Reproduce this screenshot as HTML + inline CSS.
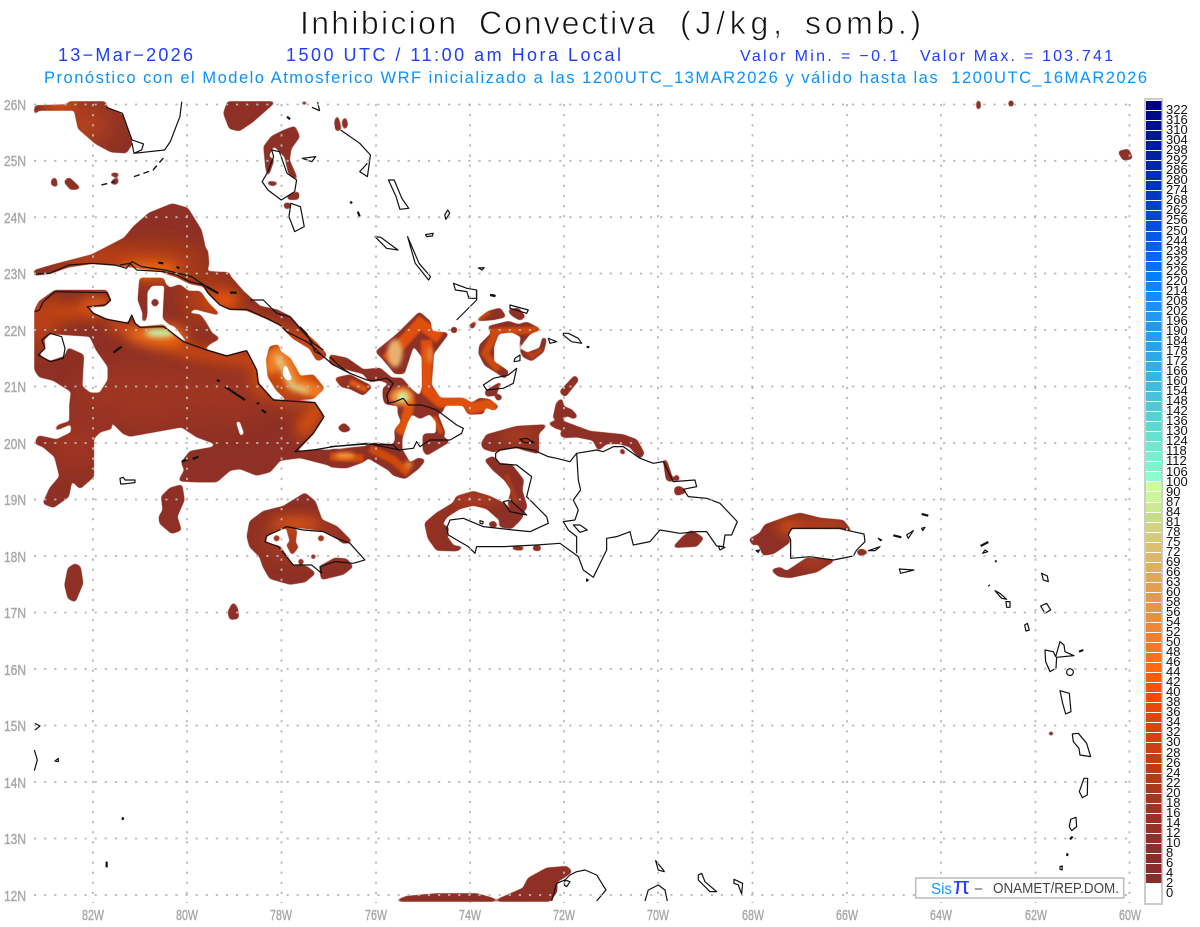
<!DOCTYPE html>
<html lang="es"><head><meta charset="utf-8"><title>Inhibicion Convectiva</title>
<style>html,body{margin:0;padding:0;background:#fff}svg{display:block}text{font-family:"Liberation Sans",sans-serif;white-space:pre}
.c path{fill:none;stroke:#111;stroke-width:1.2;vector-effect:non-scaling-stroke;stroke-linejoin:round}
.c .t path,.t path{stroke-width:2.2}
.c .d path{stroke-width:1.4;stroke-dasharray:6 4}
</style></head><body>
<svg xmlns="http://www.w3.org/2000/svg" width="1200" height="927" viewBox="0 0 1200 927">
<defs>
<filter id="b3" x="-50%" y="-50%" width="200%" height="200%"><feGaussianBlur stdDeviation="3"/></filter>
<filter id="b6" x="-50%" y="-50%" width="200%" height="200%"><feGaussianBlur stdDeviation="6"/></filter>
<filter id="b12" x="-50%" y="-50%" width="200%" height="200%"><feGaussianBlur stdDeviation="12"/></filter>
<filter id="sm" filterUnits="userSpaceOnUse" x="0" y="0" width="1200" height="927" color-interpolation-filters="sRGB">
<feGaussianBlur stdDeviation="1.5"/>
<feComponentTransfer><feFuncR type="linear" slope="5" intercept="-1.1"/><feFuncG type="linear" slope="5" intercept="-1.1"/><feFuncB type="linear" slope="5" intercept="-1.1"/></feComponentTransfer>
</filter>
<mask id="m" maskUnits="userSpaceOnUse" x="0" y="0" width="1200" height="927">
<g filter="url(#sm)">
<rect x="0" y="0" width="1200" height="927" fill="#000"/>
<g fill="#fff">
<g transform="scale(.3827,.3333)">
<path d="M90,345L92,318 175,315 180,306 275,306 280,325 320,345 345,430 330,458 290,455 250,430 205,385 195,330 100,330Z"/>
<path d="M585,340L595,306 718,306 660,365 625,392 600,385Z"/>
<path d="M690,440L710,410 745,390 770,380 782,410 760,445 755,480 778,540 755,520 745,470 715,435 700,470 715,480 700,530 695,500Z"/>
<path d="M875,365L882,345 890,390 878,392ZM895,365L902,350 908,375 900,390ZM785,306L805,306 795,315ZM135,540L145,532 150,560 135,555ZM168,545L180,533 210,565 185,568ZM290,520L310,520 308,530 290,527ZM295,540L310,535 305,553 290,550ZM700,545L728,548 715,557 700,552ZM750,590L780,575 780,597 755,598ZM742,610L760,610 755,625 745,625Z"/>
<path d="M90,812L140,795 240,765 325,715 350,680 390,640 450,612 490,625 525,690 545,790 540,815 600,820 600,850 430,815 340,800 300,795 240,790 180,800 130,820 90,825Z"/>
</g>
<g transform="translate(120,250) scale(.3333)">
<path d="M180,0L262,0 265,35 240,68 320,68 370,125 420,170 470,180 510,200 545,240 590,280 620,315 600,330 590,330 570,295 520,265 480,225 440,205 380,180 330,178 300,165 265,130 250,108 210,100 170,80 130,68 130,40Z"/>
<path d="M60,85L130,85 135,100 148,115 180,105 205,125 240,125 265,160 300,195 240,180 225,175 200,190 240,195 255,215 275,250 298,265 270,280 250,298 215,285 195,265 165,228 148,222 130,205 135,105 95,105 80,125 80,195 75,215 68,212 70,190 55,150Z"/>
<path d="M105,146L117,158 105,170 93,158Z"/>
</g>
<g transform="translate(0,280) scale(.3333)">
<path d="M105,90L118,65 165,32 320,32 332,62 312,78 262,80 280,100 320,118 385,130 395,105 405,130 420,142 490,135 505,150 550,185 620,210 680,228 740,212 770,270 775,310 820,360 945,368 972,410 940,460 885,518 940,510 1000,512 1020,518 1090,515 1105,492 1200,512 1200,590 1150,560 1100,530 1020,563 900,532 840,540 810,575 770,585 720,565 690,570 650,605 590,605 537,602 555,570 545,548 570,515 640,502 645,490 590,470 545,440 390,468 370,460 330,420 335,445 300,455 280,475 280,590 240,625 215,600 205,650 160,682 130,670 150,625 180,590 165,530 130,500 106,490 115,468 170,480 215,458 215,430 163,452 175,436 210,425 210,375 215,335 160,300 118,290 105,270Z"/>
<path d="M800,240L810,200 835,195 840,215 870,235 890,270 900,290 940,285 972,325 940,355 860,358 830,330 805,290Z"/>
<path d="M1015,445L1033,430 1052,450 1030,456Z"/>
<path d="M742,770L750,725 790,695 850,680 915,640 945,665 965,720 1010,740 1055,785 1030,790 1000,765 960,750 880,740 850,745 800,765 795,790 840,800 860,830 880,858 920,860 945,880 915,905 870,912 810,895 790,860 780,830 750,800Z"/>
<path d="M860,745L890,750 885,790 895,800 875,825 870,810 860,795 872,785ZM830,765L840,775 830,785 820,775ZM963,765L973,775 963,785 953,775ZM903,836L912,845 903,854 894,845ZM940,822L948,830 940,838 932,830ZM960,860L1005,835 1040,838 1058,860 1030,882 965,898Z"/>
<path d="M195,915L205,865 225,852 240,860 248,910 225,965 205,955ZM685,995L700,968 712,985 715,1015 690,1018ZM485,650L510,625 545,615 552,660 530,710 543,750 515,760 480,730 478,710 490,690Z"/>
</g>
<g transform="translate(330,290) scale(.3333)">
<path d="M0,195L50,205 100,240 150,235 185,265 215,265 245,300 270,320 278,290 277,200 250,165 222,250 195,250 158,205 138,185 205,130 268,67 300,95 305,125 355,130 310,190 303,285 330,325 400,325 425,340 450,325 480,330 505,350 492,360 465,350 460,370 415,372 400,345 345,345 335,368 320,368 345,430 330,445 280,440 285,432 320,432 320,395 300,370 270,385 245,370 230,400 215,445 215,478 240,520 265,505 285,510 265,535 225,565 190,555 160,520 130,490 100,515 50,533 0,530 0,480 110,470 130,460 190,465 197,450 195,420 215,395 205,370 205,345 190,345 165,340 160,320 160,295 180,280 150,270 120,275 100,250 60,240 0,220Z"/>
<path d="M15,265L60,255 125,290 100,315 60,295 35,290ZM280,435L330,435 358,455 290,495 280,480ZM25,412L42,400 62,418 40,426Z"/>
<path d="M372,110L383,120 372,130 361,120ZM415,110L475,65 510,55 527,80 490,88 440,92 430,115ZM535,60L565,55 585,80 570,90 545,75Z"/>
<path d="M475,110L535,95 565,105 590,97 632,118 600,130 580,155 570,175 590,190 630,175 640,140 648,150 640,185 605,212 580,200 568,175 575,140 545,125 505,130 490,170 490,215 535,245 525,265 505,250 465,225 447,190 450,165 485,130Z"/>
<path d="M465,305L515,275 495,315 470,318ZM505,312L517,322 505,332 495,322ZM690,305L735,257 745,270 705,320ZM670,385L680,340 695,325 700,350 725,360 742,380 730,385 710,375 695,390Z"/>
<path d="M655,400L690,390 700,395 780,425 880,435 920,450 942,490 930,505 900,470 870,460 830,460 805,480 790,450 740,440 700,442 690,430 705,420 680,415Z"/>
<path d="M875,475L885,485 880,495 870,485ZM455,460L470,435 560,410 650,405 625,430 625,490 585,480 560,472 510,480 490,485 460,475Z"/>
<path d="M465,510L490,500 505,520 545,525 580,570 575,600 590,650 575,675 545,655 535,640 545,600 525,570 490,540Z"/>
<path d="M285,700L320,670 370,640 380,620 430,605 480,620 520,640 545,665 580,675 570,690 545,715 510,710 510,690 470,655 430,645 390,655 350,680 335,705 355,712 350,740 370,768 400,772 380,782 320,780 295,745Z"/>
<path d="M475,702L490,693 502,705 490,714ZM545,770L585,772 575,780 550,778ZM610,768L632,768 630,782 610,780ZM1030,772L1060,740 1085,722 1120,745 1100,768ZM1000,505L1010,515 1030,575 1010,570ZM1030,570L1040,552 1050,570ZM1035,592L1050,590 1070,605 1045,615 1035,612Z"/>
</g>
<g transform="translate(740,500) scale(.3333)">
<path d="M28,118L60,100 75,75 150,48 180,40 240,55 310,62 335,95 300,85 155,85 140,105 150,125 130,140 100,160 70,165 55,130 40,135Z"/>
<path d="M95,210L120,203 140,215 200,175 285,180 230,215 150,232 115,228ZM350,155L365,147 385,158 360,167Z"/>
</g>
<g transform="translate(1100,90) scale(.3333)"><path d="M55,185L85,178 97,205 70,210Z"/></g>
<g transform="translate(380,820) scale(.3333)">
<path d="M45,243L80,230 170,222 290,222 330,233 350,240 385,225 430,205 445,175 500,145 560,140 575,155 555,170 530,185 530,215 510,243Z"/>
</g>
<rect x="977" y="101" width="3" height="8"/><rect x="1009" y="101" width="4" height="5"/><rect x="1049" y="732" width="4" height="3"/>
</g>
<g fill="#000">
<g transform="translate(0,280) scale(.3333)">
<path d="M130,180L150,160 270,168 290,210 325,260 325,300 300,340 270,340 245,320 250,225 205,205 195,230 150,245 115,225 135,200Z"/>
<path d="M705,425L720,420 735,462 720,472Z"/>
<path d="M850,255L862,255 880,300 860,305 845,285Z"/>
<path d="M1010,512L1090,512 1080,518 1020,518Z"/>
</g>
</g>
</g>
</mask>
</defs>
<rect width="1200" height="927" fill="#fff"/>
<text x="300" y="34" font-size="32" textLength="156" fill="#111" stroke="#fff" stroke-width=".7">Inhibicion</text>
<text x="479" y="34" font-size="32" textLength="176" fill="#111" stroke="#fff" stroke-width=".7">Convectiva</text>
<text x="680" y="34" font-size="32" textLength="102" fill="#111" stroke="#fff" stroke-width=".7">(J/kg,</text>
<text x="805" y="34" font-size="32" textLength="116" fill="#111" stroke="#fff" stroke-width=".7">somb.)</text>
<g fill="#1f3cff">
<text x="58" y="61" font-size="18" textLength="135">13−Mar−2026</text>
<text x="286" y="61" font-size="18" textLength="335">1500 UTC / 11:00 am Hora Local</text>
<text x="740" y="61" font-size="16" textLength="158">Valor Min. = −0.1</text>
<text x="920" y="61" font-size="16" textLength="193">Valor Max. = 103.741</text>
</g>
<text x="44" y="83" font-size="16.5" textLength="1103" fill="#0a92ff">Pronóstico con el Modelo Atmosferico WRF inicializado a las 1200UTC_13MAR2026 y válido hasta las  1200UTC_16MAR2026</text>

<g mask="url(#m)">
<rect x="0" y="90" width="1200" height="837" fill="#8e3025"/>
<g filter="url(#b12)">
<ellipse cx="145" cy="395" rx="70" ry="32" fill="#9e3622"/>
<ellipse cx="215" cy="395" rx="50" ry="30" fill="#9c3522"/>
<ellipse cx="300" cy="385" rx="30" ry="22" fill="#a4381e"/>
<ellipse cx="75" cy="445" rx="25" ry="25" fill="#a03620"/>
<ellipse cx="42" cy="320" rx="12" ry="28" fill="#d0480e"/>
<ellipse cx="130" cy="262" rx="75" ry="14" fill="#c4440f"/>
<ellipse cx="210" cy="300" rx="25" ry="18" fill="#c2440f"/>
<ellipse cx="85" cy="125" rx="25" ry="20" fill="#b5421a"/>
<ellipse cx="300" cy="540" rx="40" ry="12" fill="#b8421a"/>
<ellipse cx="295" cy="372" rx="35" ry="30" fill="#d4500f"/>
</g>
<g filter="url(#b6)">
<path d="M50,312L105,312M110,322L150,340 190,352 250,360" fill="none" stroke="#c9460f" stroke-width="14"/>
<path d="M255,355L262,395" fill="none" stroke="#c8480f" stroke-width="10"/>
<path d="M320,405L300,435" fill="none" stroke="#d6500e" stroke-width="16"/>
<ellipse cx="97" cy="303" rx="18" ry="5" fill="#ee6010"/>
<ellipse cx="157" cy="335" rx="30" ry="11" fill="#ee6a12"/>
<ellipse cx="150" cy="270" rx="30" ry="8" fill="#f26a10"/>
<path d="M240,315L285,335 325,350" fill="none" stroke="#cf4a10" stroke-width="12"/>
<ellipse cx="225" cy="300" rx="14" ry="8" fill="#ea5410"/>
<ellipse cx="60" cy="105" rx="18" ry="5" fill="#ea5a10"/>
<ellipse cx="295" cy="523" rx="25" ry="5" fill="#e85a12"/>
<ellipse cx="820" cy="526" rx="30" ry="5" fill="#c24416"/>
<ellipse cx="789" cy="527" rx="12" ry="6" fill="#dc5210"/>
<ellipse cx="813" cy="561" rx="15" ry="3" fill="#c9481a"/>
<ellipse cx="519" cy="435" rx="18" ry="7" fill="#aa3c1c"/>
<ellipse cx="475" cy="499" rx="25" ry="5" fill="#b8401a"/>
<path d="M430,545L432,520 445,510" fill="none" stroke="#a03620" stroke-width="6"/>
</g>
<g transform="translate(330,290) scale(.3333)" filter="url(#b3)" fill="none">
<path d="M170,210L270,100 330,145M290,150L290,300 330,335 410,335 425,355 470,345 500,350" stroke="#e0500d" stroke-width="34"/>
<path d="M0,500L100,505M120,475L190,510 235,550" stroke="#cf490f" stroke-width="24"/>
<path d="M210,300L240,340 225,400 205,430" stroke="#e0520e" stroke-width="30"/>
<path d="M310,380L335,430" stroke="#d4490f" stroke-width="16"/>
<path d="M480,125L625,120M495,135L465,190 505,240" stroke="#cd490f" stroke-width="22"/>
<path d="M580,165L605,200 635,178" stroke="#b6401a" stroke-width="14"/>
<path d="M60,275L110,300" stroke="#dc5810" stroke-width="18"/>
<path d="M480,65L430,100" stroke="#c4440f" stroke-width="14"/>
<path d="M530,555L560,640" stroke="#a83a1e" stroke-width="14"/>
</g>
<g transform="translate(330,290) scale(.3333)" filter="url(#b6)">
<ellipse cx="195" cy="190" rx="22" ry="42" fill="#e8b070"/>
<ellipse cx="215" cy="320" rx="36" ry="28" fill="#f08a30"/>
<ellipse cx="218" cy="320" rx="16" ry="12" fill="#c8f5a0"/>
<ellipse cx="45" cy="497" rx="30" ry="9" fill="#f59a38"/>
<ellipse cx="235" cy="525" rx="12" ry="12" fill="#f08030"/>
<ellipse cx="300" cy="195" rx="9" ry="25" fill="#e8843a"/>
</g>
<g filter="url(#b3)" fill="none" stroke-linecap="round">
<path d="M272,367Q272,347 285,356L294,383 318,392" stroke="#ef7a20" stroke-width="14"/>
<path d="M278,358L292,387 306,391" stroke="#d8e890" stroke-width="4"/>
</g>
<ellipse cx="160" cy="333" rx="15" ry="4" fill="#c6f5a8" filter="url(#b3)"/>
</g>

<g class="c">
<g transform="translate(0,280) scale(.3333)">
<path d="M105,95L118,90 130,65 165,35 320,38 332,60 315,75 262,80 280,100 320,118 385,130 395,105 405,130 420,142 490,140 505,150 550,185 620,210 680,228 740,212 770,270 775,310 820,360 945,368 972,410 940,460 885,515 940,510 1000,500 1100,490 1200,510"/>
<path d="M125,180L150,160 185,170 195,205 190,235 150,245 115,225 135,205Z"/>
<path d="M795,785L800,768 860,740 910,750 970,755 1010,775 1050,790 1095,840 1060,850 1005,845 960,860 965,880 935,855 880,855 835,800Z"/>
<path d="M360,595L370,592 375,600 405,600 405,608 370,612 362,612Z"/>
<g class="t"><path d="M340,218L365,200M650,300L660,304M675,320L735,360M770,370L778,370M785,390L798,398M545,545L565,538M578,537L595,530"/></g>
</g>
<g transform="translate(330,290) scale(.3333)">
<path d="M0,470L110,462 130,462 190,465 205,480 250,475 260,455 270,470 300,450 360,450 395,430 400,415 380,405 340,375 320,360 275,345 235,345 220,325 195,335 175,340 170,315 190,280 170,265 130,272 110,270 60,250 30,230 0,200"/>
<path d="M497,490L510,480 560,472 610,480 655,500 680,505 720,515 740,490 800,480 820,485 850,470 880,470 930,505 970,520 1000,515 1030,575 1095,570 1100,590 1060,598 1075,620 1130,625 1170,640 1222,695 1205,735 1185,735 1180,770 1160,768 1130,725 1100,725 1050,730 990,720 960,755 910,765 900,725 860,740 830,745 830,780 790,862 760,840 745,800 690,760 620,765 520,770 440,770 435,790 415,770 355,735 350,715 360,690 400,685 460,710 550,720 600,725 655,700 650,680 590,620 605,560 560,525 510,522 497,505Z"/>
<path d="M740,490L745,570 752,600 730,630 745,660 735,690 700,695 715,720 740,740 740,790"/>
<path d="M520,635L540,630 590,675 540,665ZM570,448L590,445 612,458 585,458ZM1165,768L1185,772 1170,780ZM555,205L570,195 570,212 552,215ZM460,285L490,265 535,255 560,235 550,280 520,295 470,300ZM540,45L595,60 590,70 540,55ZM700,130L715,130 745,145 755,160 725,155 700,135ZM655,145L680,155 660,160ZM380,90L410,60 440,30 440,0M730,705L750,705 772,720 750,727ZM450,692L460,695 458,702 450,700ZM770,867L775,870 770,874Z"/>
<g class="t"><path d="M770,170L778,172M480,15L495,18"/></g>
</g>
<g transform="scale(.3827,.3333)">
<path d="M90,822L130,820 180,795 240,790 300,795 330,805 345,785 370,800 430,810 500,830 540,860 570,880"/>
<path d="M278,322L320,340 345,420 375,432 370,450 350,460 345,430M350,460L430,450 445,425 470,350 475,305"/>
<path d="M710,450L730,455 750,520 775,540 770,575 735,600 700,570 685,545 700,515 715,470ZM760,610L785,620 795,680 770,695 755,650ZM790,475L825,470 815,485ZM890,390L940,430 968,465 960,530 940,515 960,490M1015,540L1030,540 1050,595 1068,625 1045,628 1035,590ZM1170,630L1175,640 1165,658 1162,645ZM980,710L995,712 1040,750 1010,745ZM1065,710L1095,790 1125,830 1120,840 1085,790ZM1112,704L1132,700 1130,708 1115,710ZM1250,804L1265,803 1260,810ZM1185,850L1220,865 1245,870 1245,895 1225,895 1220,875 1190,870ZM830,306L835,332 815,322"/>
<g class="d"><path d="M265,555L300,545M350,530L400,510 430,470"/></g>
<g class="t"><path d="M750,350L758,358M915,605L920,610M935,635L940,650M1285,885L1295,888"/></g>
</g>
<g transform="translate(120,250) scale(.3333)">
<path d="M0,45L30,40 50,60 130,65 170,75 210,95 250,105 265,130 300,165 330,178 380,178 440,205 480,225 500,245 560,275 580,290 605,315 640,345 690,370"/>
<path d="M390,150L430,150 470,190 510,200 540,235 580,280 610,300M540,230L560,250 585,305 605,315"/>
<g class="t"><path d="M260,110L295,130M330,128L350,128M115,38L130,40M170,50L178,55"/></g>
</g>
<g transform="translate(380,820) scale(.3333)">
<path d="M515,243L530,190 555,180 570,165 590,155 615,150 650,165 678,210 650,243M555,180L570,185 560,200 553,195ZM827,122L850,150 853,155 835,150ZM795,243L805,210 835,195 855,210 862,243M955,165L965,160 975,185 1010,215 990,215 955,180ZM1062,178L1088,190 1085,222 1075,195 1062,190Z"/>
</g>
<g transform="translate(0,680) scale(.3333)">
<path d="M105,130L120,138 105,150M103,210L112,240 103,272M165,243L175,235 175,245Z"/>
<g class="t"><path d="M367,420L370,412M320,545L320,562"/></g>
</g>
<g transform="translate(740,500) scale(.3333)">
<path d="M155,85L300,85 340,95 372,102 375,125 350,150 340,168 280,180 210,170 152,175 152,120 145,105ZM385,152L420,140 405,152ZM48,152L58,150 55,157ZM415,115L425,120 422,122ZM500,105L520,92 505,115ZM545,85L555,82 548,92ZM735,150L743,155 728,160ZM478,207L522,210 482,220ZM765,272L780,280 800,298 785,295ZM798,305L810,305 810,322 800,322ZM905,220L922,228 925,245 910,240ZM902,318L920,310 932,330 915,340Z"/>
<g class="t"><path d="M460,106L484,112M545,42L565,47M722,138L745,126M765,183L770,185M746,255L748,258"/></g>
</g>
<g transform="translate(880,530) scale(.3333)">
<path d="M434,285L442,280 448,300 438,303ZM495,360L520,365 527,380 540,335 552,345 555,365 582,377 530,382 528,415 510,425 497,395ZM560,425A10,10 0 1 1 580,428A10,10 0 1 1 560,425ZM540,482L568,490 573,545 557,552 548,520ZM577,612L595,610 620,640 632,680 600,675 597,655 580,635ZM612,745L623,745 622,795 607,803 598,785ZM572,868L588,862 590,890 575,902 568,890ZM540,1010L547,1008 546,1020 540,1018Z"/>
<g class="t"><path d="M597,365L610,360M570,928L578,920M561,978L563,970"/></g>
</g>
</g>

<g fill="none" stroke="#b8b8b8" stroke-width="1.8" stroke-dasharray="2.2 7.9">
<path d="M34,104.5H1130M34,160.8H1130M34,217.2H1130M34,273.5H1130M34,330H1130M34,386.5H1130M34,443H1130M34,499.5H1130M34,556H1130M34,612.5H1130M34,669H1130M34,725.5H1130M34,782H1130M34,838.5H1130M34,895H1130"/>
<path d="M93,104V903M187,104V903M281.500,104V903M376,104V903M470,104V903M564,104V903M658,104V903M752.500,104V903M847,104V903M941,104V903M1035.500,104V903M1129.500,104V903"/>
</g>

<g fill="#a8a8a8" font-size="15" stroke="#a8a8a8" stroke-width=".4">
<text x="4" y="110" textLength="22" lengthAdjust="spacingAndGlyphs">26N</text><text x="4" y="166" textLength="22" lengthAdjust="spacingAndGlyphs">25N</text><text x="4" y="223" textLength="22" lengthAdjust="spacingAndGlyphs">24N</text><text x="4" y="279" textLength="22" lengthAdjust="spacingAndGlyphs">23N</text><text x="4" y="336" textLength="22" lengthAdjust="spacingAndGlyphs">22N</text><text x="4" y="392" textLength="22" lengthAdjust="spacingAndGlyphs">21N</text><text x="4" y="449" textLength="22" lengthAdjust="spacingAndGlyphs">20N</text><text x="4" y="505" textLength="22" lengthAdjust="spacingAndGlyphs">19N</text><text x="4" y="562" textLength="22" lengthAdjust="spacingAndGlyphs">18N</text><text x="4" y="618" textLength="22" lengthAdjust="spacingAndGlyphs">17N</text><text x="4" y="675" textLength="22" lengthAdjust="spacingAndGlyphs">16N</text><text x="4" y="731" textLength="22" lengthAdjust="spacingAndGlyphs">15N</text><text x="4" y="788" textLength="22" lengthAdjust="spacingAndGlyphs">14N</text><text x="4" y="844" textLength="22" lengthAdjust="spacingAndGlyphs">13N</text><text x="4" y="901" textLength="22" lengthAdjust="spacingAndGlyphs">12N</text>
<text x="82" y="920" textLength="22" lengthAdjust="spacingAndGlyphs">82W</text><text x="176" y="920" textLength="22" lengthAdjust="spacingAndGlyphs">80W</text><text x="270" y="920" textLength="22" lengthAdjust="spacingAndGlyphs">78W</text><text x="365" y="920" textLength="22" lengthAdjust="spacingAndGlyphs">76W</text><text x="459" y="920" textLength="22" lengthAdjust="spacingAndGlyphs">74W</text><text x="553" y="920" textLength="22" lengthAdjust="spacingAndGlyphs">72W</text><text x="647" y="920" textLength="22" lengthAdjust="spacingAndGlyphs">70W</text><text x="742" y="920" textLength="22" lengthAdjust="spacingAndGlyphs">68W</text><text x="836" y="920" textLength="22" lengthAdjust="spacingAndGlyphs">66W</text><text x="930" y="920" textLength="22" lengthAdjust="spacingAndGlyphs">64W</text><text x="1025" y="920" textLength="22" lengthAdjust="spacingAndGlyphs">62W</text><text x="1119" y="920" textLength="22" lengthAdjust="spacingAndGlyphs">60W</text>
</g>

<rect x="915.700" y="878" width="208" height="20" fill="#fff" stroke="#bbb" stroke-width="1.500"/>
<text x="931" y="894" font-size="16" fill="#1496ff" textLength="21" lengthAdjust="spacingAndGlyphs">Sis</text>
<text x="953" y="894" font-size="24" fill="#2a40ff" textLength="17" lengthAdjust="spacingAndGlyphs">π</text>
<text x="974" y="894" font-size="15" fill="#555">−</text>
<text x="993" y="893" font-size="15" fill="#444" textLength="126" lengthAdjust="spacingAndGlyphs">ONAMET/REP.DOM.</text>

<rect x="1145" y="99" width="17" height="805" fill="#fff" stroke="#ccc" stroke-width="2"/>
<g shape-rendering="crispEdges">
<rect x="1146" y="101" width="15.500" height="9" fill="#00007f"/><rect x="1146" y="111" width="15.500" height="9" fill="#000a86"/><rect x="1146" y="121" width="15.500" height="9" fill="#00108d"/><rect x="1146" y="131" width="15.500" height="9" fill="#001692"/><rect x="1146" y="141" width="15.500" height="9" fill="#001c98"/><rect x="1146" y="151" width="15.500" height="9" fill="#00229f"/><rect x="1146" y="161" width="15.500" height="9" fill="#0028a6"/><rect x="1146" y="171" width="15.500" height="9" fill="#002eb0"/><rect x="1146" y="181" width="15.500" height="9" fill="#0034b8"/><rect x="1146" y="191" width="15.500" height="9" fill="#003ac2"/><rect x="1146" y="201" width="15.500" height="9" fill="#0040ca"/><rect x="1146" y="211" width="15.500" height="9" fill="#0048d2"/><rect x="1146" y="221" width="15.500" height="10" fill="#0050dc"/><rect x="1146" y="232" width="15.500" height="9" fill="#0058e4"/><rect x="1146" y="242" width="15.500" height="9" fill="#0060ec"/><rect x="1146" y="252" width="15.500" height="9" fill="#0068f2"/><rect x="1146" y="262" width="15.500" height="9" fill="#0070f8"/><rect x="1146" y="272" width="15.500" height="9" fill="#007cff"/><rect x="1146" y="282" width="15.500" height="9" fill="#0a84ff"/><rect x="1146" y="292" width="15.500" height="9" fill="#128cfc"/><rect x="1146" y="302" width="15.500" height="9" fill="#1a90f8"/><rect x="1146" y="312" width="15.500" height="9" fill="#2098f4"/><rect x="1146" y="322" width="15.500" height="9" fill="#2098f0"/><rect x="1146" y="332" width="15.500" height="9" fill="#249ef0"/><rect x="1146" y="342" width="15.500" height="9" fill="#28a2ea"/><rect x="1146" y="352" width="15.500" height="9" fill="#2ca8e8"/><rect x="1146" y="362" width="15.500" height="9" fill="#30aee6"/><rect x="1146" y="372" width="15.500" height="9" fill="#38b4e2"/><rect x="1146" y="382" width="15.500" height="9" fill="#40bcde"/><rect x="1146" y="392" width="15.500" height="9" fill="#48c2da"/><rect x="1146" y="402" width="15.500" height="9" fill="#50c8d6"/><rect x="1146" y="412" width="15.500" height="9" fill="#58d0d4"/><rect x="1146" y="422" width="15.500" height="9" fill="#60d8d2"/><rect x="1146" y="432" width="15.500" height="9" fill="#68e0d0"/><rect x="1146" y="442" width="15.500" height="9" fill="#70e8d0"/><rect x="1146" y="452" width="15.500" height="9" fill="#78f0d0"/><rect x="1146" y="462" width="15.500" height="9" fill="#80f4cc"/><rect x="1146" y="472" width="15.500" height="9" fill="#88ffcc"/><rect x="1146" y="482" width="15.500" height="9" fill="#ccff99"/><rect x="1146" y="492" width="15.500" height="10" fill="#cef59a"/><rect x="1146" y="503" width="15.500" height="9" fill="#cceb90"/><rect x="1146" y="513" width="15.500" height="9" fill="#c8de85"/><rect x="1146" y="523" width="15.500" height="9" fill="#d0d480"/><rect x="1146" y="533" width="15.500" height="9" fill="#d4cc78"/><rect x="1146" y="543" width="15.500" height="9" fill="#dcc070"/><rect x="1146" y="553" width="15.500" height="9" fill="#dcb868"/><rect x="1146" y="563" width="15.500" height="9" fill="#dcb060"/><rect x="1146" y="573" width="15.500" height="9" fill="#dea858"/><rect x="1146" y="583" width="15.500" height="9" fill="#e0a050"/><rect x="1146" y="593" width="15.500" height="9" fill="#e09c4c"/><rect x="1146" y="603" width="15.500" height="9" fill="#e29848"/><rect x="1146" y="613" width="15.500" height="9" fill="#e89040"/><rect x="1146" y="623" width="15.500" height="9" fill="#ec8838"/><rect x="1146" y="633" width="15.500" height="9" fill="#f08030"/><rect x="1146" y="643" width="15.500" height="9" fill="#f47828"/><rect x="1146" y="653" width="15.500" height="9" fill="#fa7020"/><rect x="1146" y="663" width="15.500" height="9" fill="#ff6a10"/><rect x="1146" y="673" width="15.500" height="9" fill="#ff5c08"/><rect x="1146" y="683" width="15.500" height="9" fill="#f85006"/><rect x="1146" y="693" width="15.500" height="9" fill="#f04c06"/><rect x="1146" y="703" width="15.500" height="9" fill="#e84808"/><rect x="1146" y="713" width="15.500" height="9" fill="#e0460a"/><rect x="1146" y="723" width="15.500" height="9" fill="#d8440c"/><rect x="1146" y="733" width="15.500" height="9" fill="#d4420e"/><rect x="1146" y="743" width="15.500" height="10" fill="#cc4010"/><rect x="1146" y="754" width="15.500" height="9" fill="#c43e12"/><rect x="1146" y="764" width="15.500" height="9" fill="#bc3c14"/><rect x="1146" y="774" width="15.500" height="9" fill="#b43a18"/><rect x="1146" y="784" width="15.500" height="9" fill="#ac381a"/><rect x="1146" y="794" width="15.500" height="9" fill="#a8361e"/><rect x="1146" y="804" width="15.500" height="9" fill="#a03422"/><rect x="1146" y="814" width="15.500" height="9" fill="#983226"/><rect x="1146" y="824" width="15.500" height="9" fill="#983228"/><rect x="1146" y="834" width="15.500" height="9" fill="#90302a"/><rect x="1146" y="844" width="15.500" height="9" fill="#8c2e2c"/><rect x="1146" y="854" width="15.500" height="9" fill="#8a2c2c"/><rect x="1146" y="864" width="15.500" height="9" fill="#882c2c"/><rect x="1146" y="874" width="15.500" height="9" fill="#882c2c"/>
</g>
<g font-size="13" fill="#111">
<text x="1166" y="114">322</text><text x="1166" y="124">316</text><text x="1166" y="134">310</text><text x="1166" y="144">304</text><text x="1166" y="154">298</text><text x="1166" y="164">292</text><text x="1166" y="174">286</text><text x="1166" y="184">280</text><text x="1166" y="194">274</text><text x="1166" y="204">268</text><text x="1166" y="214">262</text><text x="1166" y="224">256</text><text x="1166" y="235">250</text><text x="1166" y="245">244</text><text x="1166" y="255">238</text><text x="1166" y="265">232</text><text x="1166" y="275">226</text><text x="1166" y="285">220</text><text x="1166" y="295">214</text><text x="1166" y="305">208</text><text x="1166" y="315">202</text><text x="1166" y="325">196</text><text x="1166" y="335">190</text><text x="1166" y="345">184</text><text x="1166" y="355">178</text><text x="1166" y="365">172</text><text x="1166" y="375">166</text><text x="1166" y="385">160</text><text x="1166" y="395">154</text><text x="1166" y="405">148</text><text x="1166" y="415">142</text><text x="1166" y="425">136</text><text x="1166" y="435">130</text><text x="1166" y="445">124</text><text x="1166" y="455">118</text><text x="1166" y="465">112</text><text x="1166" y="476">106</text><text x="1166" y="486">100</text><text x="1166" y="496">90</text><text x="1166" y="506">87</text><text x="1166" y="516">84</text><text x="1166" y="526">81</text><text x="1166" y="536">78</text><text x="1166" y="546">75</text><text x="1166" y="556">72</text><text x="1166" y="566">69</text><text x="1166" y="576">66</text><text x="1166" y="586">63</text><text x="1166" y="596">60</text><text x="1166" y="606">58</text><text x="1166" y="616">56</text><text x="1166" y="626">54</text><text x="1166" y="636">52</text><text x="1166" y="646">50</text><text x="1166" y="656">48</text><text x="1166" y="666">46</text><text x="1166" y="676">44</text><text x="1166" y="686">42</text><text x="1166" y="696">40</text><text x="1166" y="706">38</text><text x="1166" y="716">36</text><text x="1166" y="726">34</text><text x="1166" y="736">32</text><text x="1166" y="746">30</text><text x="1166" y="757">28</text><text x="1166" y="767">26</text><text x="1166" y="777">24</text><text x="1166" y="787">22</text><text x="1166" y="797">20</text><text x="1166" y="807">18</text><text x="1166" y="817">16</text><text x="1166" y="827">14</text><text x="1166" y="837">12</text><text x="1166" y="847">10</text><text x="1166" y="857">8</text><text x="1166" y="867">6</text><text x="1166" y="877">4</text><text x="1166" y="887">2</text><text x="1166" y="897">0</text>
</g>
</svg>
</body></html>
